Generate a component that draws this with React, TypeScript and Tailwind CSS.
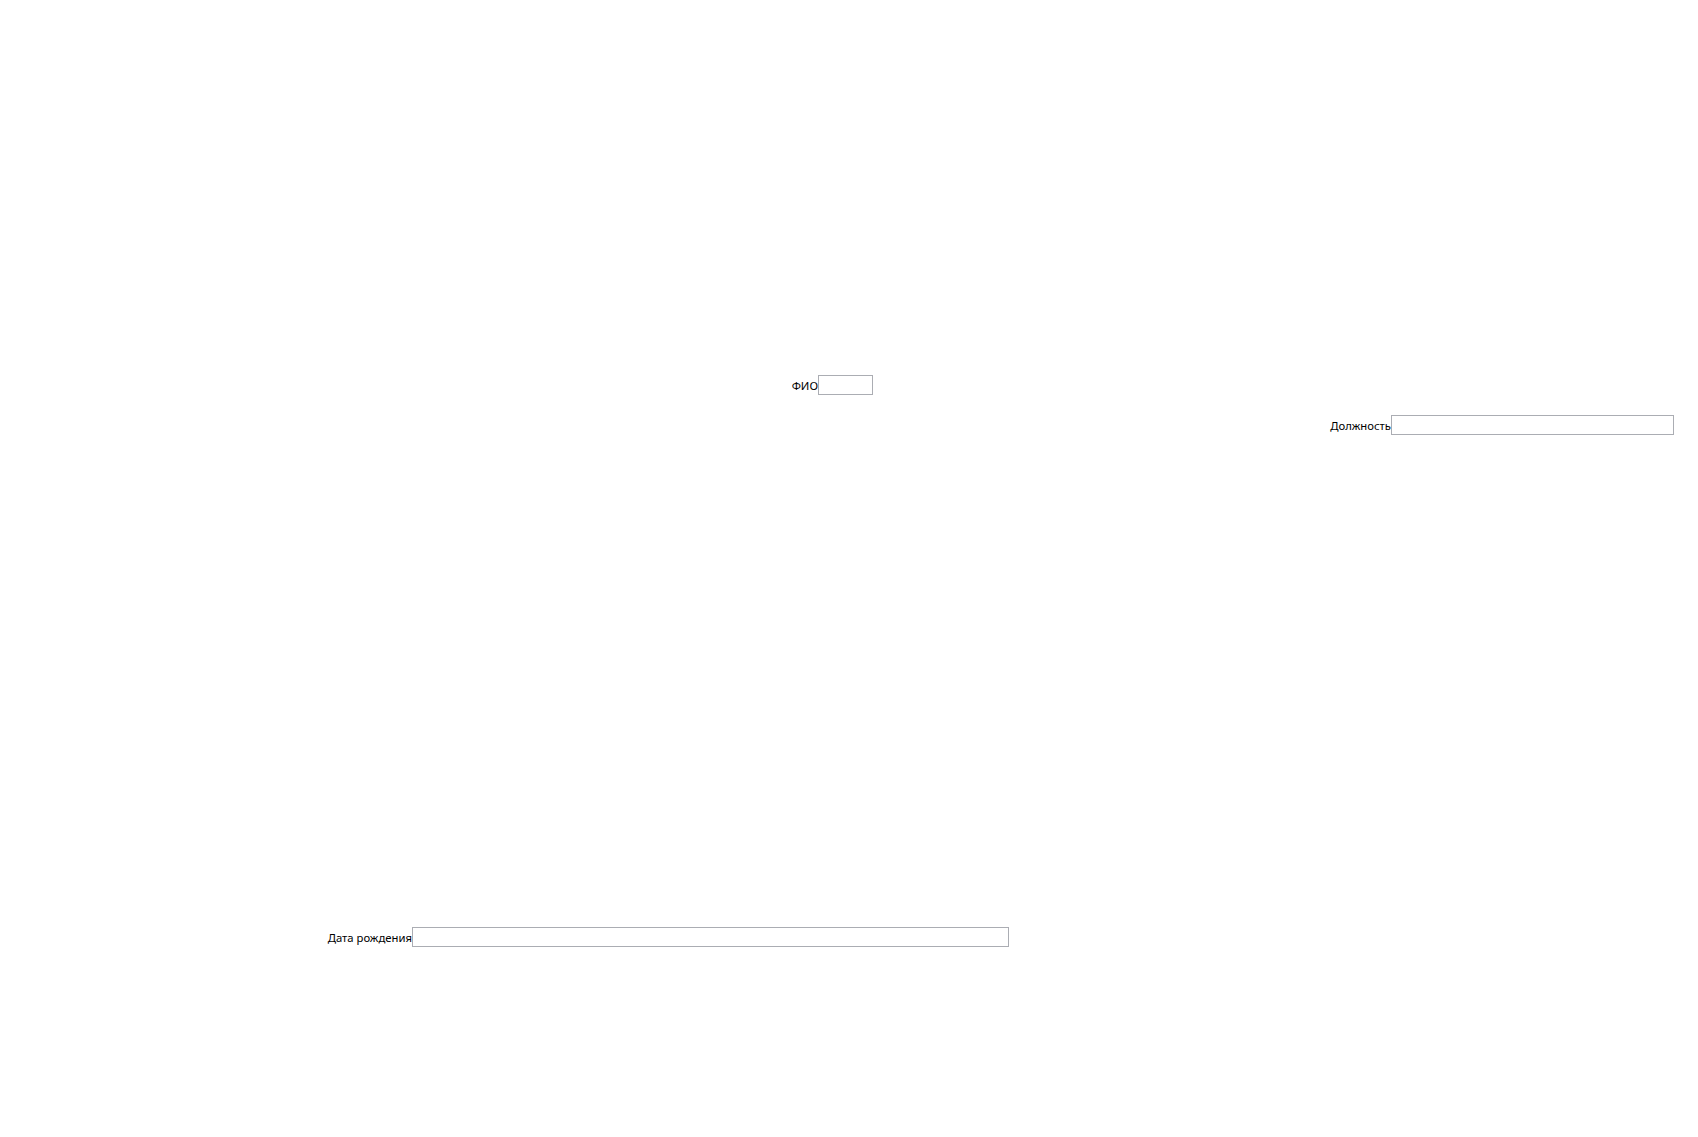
import React from 'react';

const fieldFont = { fontFamily: '"Noto Sans", "Open Sans", sans-serif' };

function Field({ label, labelWidth, inputWidth, className }: { label: string; labelWidth: string; inputWidth: string; className: string }) {
  return (
    <div className={`flex items-center h-[20px] ${className}`}>
      <label className={`flex justify-end whitespace-nowrap pt-[2px] text-[11.3px] leading-none text-black ${labelWidth}`}>{label}</label>
      <input type="text" className={`h-[20px] border border-[#abadb3] bg-white px-[2px] text-[12px] outline-none ${inputWidth}`} />
    </div>
  );
}

export default function App() {
  return (
    <div className="min-h-screen w-full bg-white pt-[375px]" style={fieldFont}>
      <Field label="ФИО" labelWidth="w-[26px]" inputWidth="w-[55px]" className="ml-[792px]" />
      <Field label="Должность" labelWidth="w-[60px]" inputWidth="w-[283px]" className="ml-[1331px] mt-[20px]" />
      <Field label="Дата рождения" labelWidth="w-[85px]" inputWidth="w-[597px]" className="ml-[327px] mt-[492px]" />
    </div>
  );
}
